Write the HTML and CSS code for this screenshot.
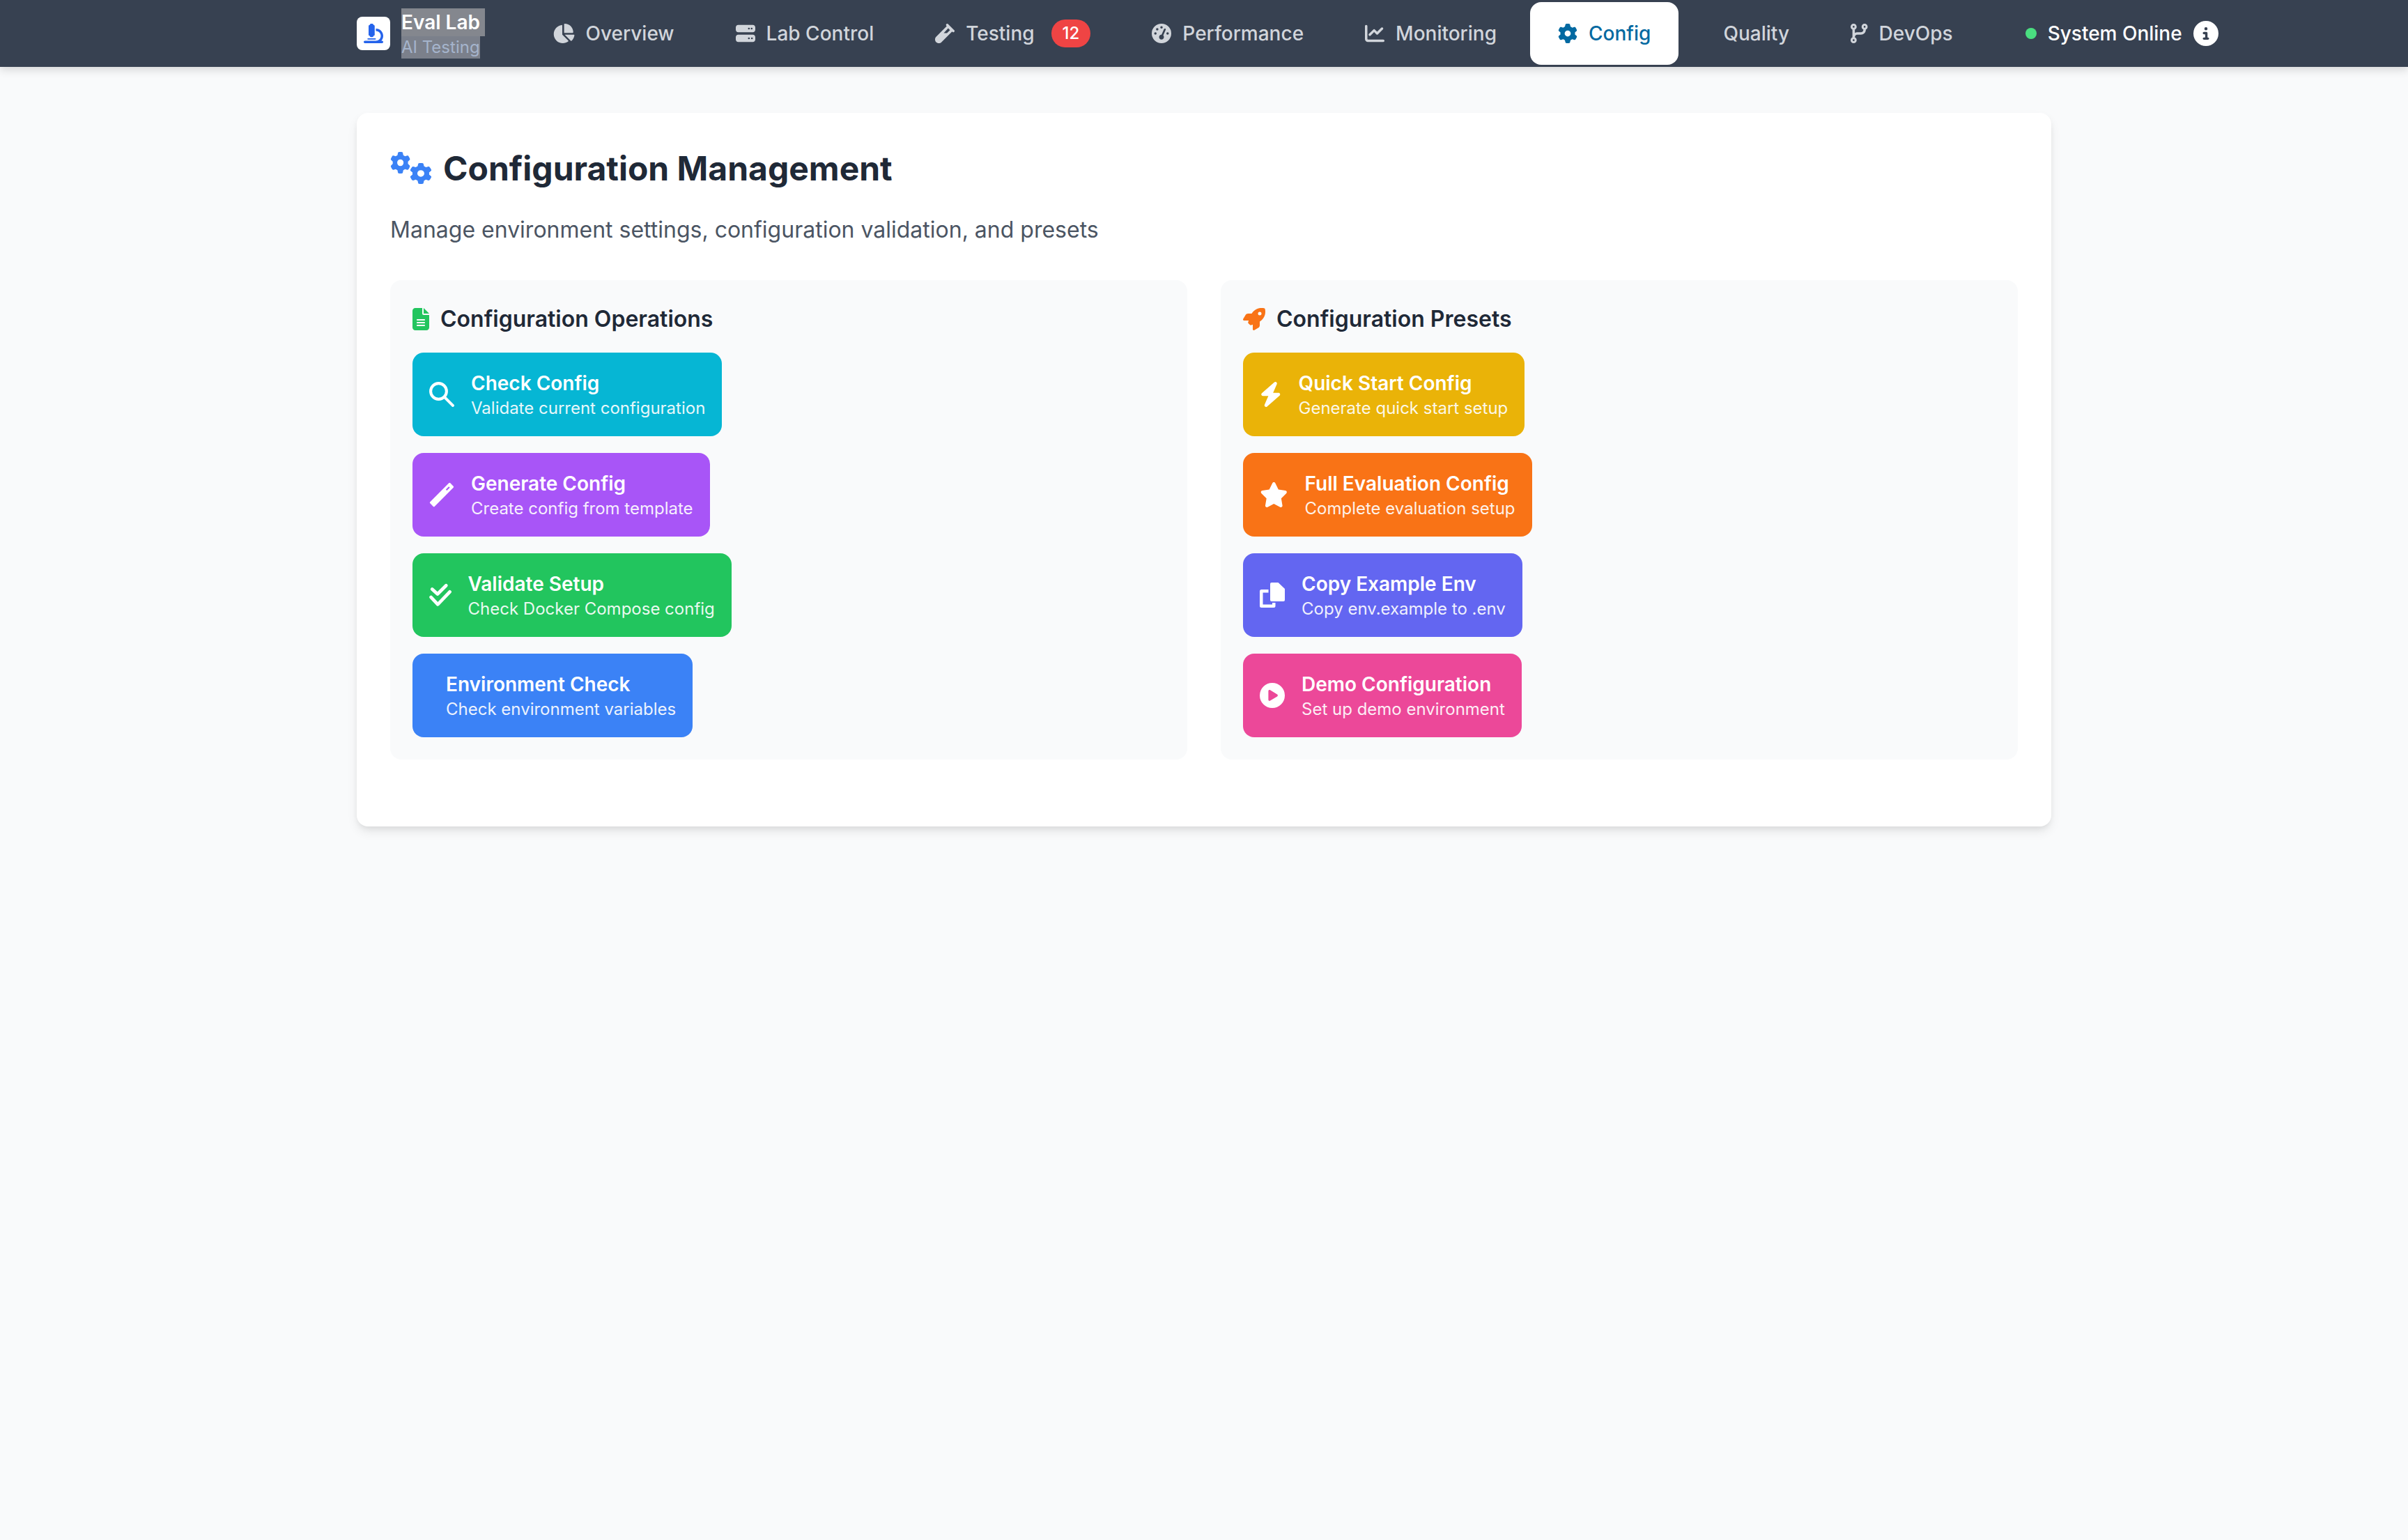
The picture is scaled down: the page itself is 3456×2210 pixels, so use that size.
FILE: index.html
```html
<!DOCTYPE html>
<html lang="en">
<head>
    <meta charset="UTF-8">
    <meta name="viewport" content="width=device-width, initial-scale=1.0">
    <title>Eval Lab - Config</title>
    <link rel="stylesheet" href="styles.css">
</head>
<body>
<svg class="defs" aria-hidden="true">
    <symbol id="gear" viewBox="0 0 512 512" preserveAspectRatio="none"><path d="M495.9 166.6c3.2 8.7 .5 18.4-6.4 24.6l-43.3 39.4c1.1 8.3 1.7 16.8 1.7 25.4s-.6 17.1-1.7 25.4l43.3 39.4c6.9 6.2 9.6 15.9 6.4 24.6c-4.4 11.9-9.7 23.3-15.8 34.3l-4.7 8.1c-6.6 11-14 21.4-22.1 31.2c-5.9 7.2-15.7 9.6-24.5 6.8l-55.7-17.7c-13.4 10.3-28.2 18.9-44 25.4l-12.5 57.1c-2 9.1-9 16.3-18.2 17.8c-13.8 2.3-28 3.5-42.5 3.5s-28.7-1.2-42.5-3.5c-9.2-1.5-16.2-8.7-18.2-17.8l-12.5-57.1c-15.8-6.5-30.6-15.1-44-25.4L83.1 425.9c-8.8 2.8-18.6 .3-24.5-6.8c-8.1-9.8-15.5-20.2-22.1-31.2l-4.7-8.1c-6.1-11-11.4-22.4-15.8-34.3c-3.2-8.7-.5-18.4 6.4-24.6l43.3-39.4C64.6 273.1 64 264.6 64 256s.6-17.1 1.7-25.4L22.4 191.2c-6.9-6.2-9.6-15.9-6.4-24.6c4.4-11.9 9.7-23.3 15.8-34.3l4.7-8.1c6.6-11 14-21.4 22.1-31.2c5.9-7.2 15.7-9.6 24.5-6.8l55.7 17.7c13.4-10.3 28.2-18.9 44-25.4l12.5-57.1c2-9.1 9-16.3 18.2-17.8C227.3 1.2 241.5 0 256 0s28.7 1.2 42.5 3.5c9.2 1.5 16.2 8.7 18.2 17.8l12.5 57.1c15.8 6.5 30.6 15.1 44 25.4l55.7-17.7c8.8-2.8 18.6-.3 24.5 6.8c8.1 9.8 15.5 20.2 22.1 31.2l4.7 8.1c6.1 11 11.4 22.4 15.8 34.3zM256 336a80 80 0 1 0 0-160 80 80 0 1 0 0 160z"/></symbol>
</svg>

<nav class="topbar">
    <div class="topbar-inner">
        <div class="brand">
            <div class="brand-logo">
                <svg class="brand-icon" viewBox="0 0 512 512"><path d="M160 32c0-17.7 14.3-32 32-32h32c17.7 0 32 14.3 32 32c17.7 0 32 14.3 32 32V288c0 17.7-14.3 32-32 32c0 17.7-14.3 32-32 32H192c-17.7 0-32-14.3-32-32c-17.7 0-32-14.3-32-32V64c0-17.7 14.3-32 32-32zM32 448H320c70.7 0 128-57.3 128-128s-57.3-128-128-128V128c106 0 192 86 192 192c0 49.2-18.5 94-48.9 128H480c17.7 0 32 14.3 32 32s-14.3 32-32 32H320 32c-17.7 0-32-14.3-32-32s14.3-32 32-32zm80-64H304c8.8 0 16 7.2 16 16s-7.2 16-16 16H112c-8.8 0-16-7.2-16-16s7.2-16 16-16z"/></svg>
            </div>
            <div class="brand-text">
                <div class="brand-name">Eval Lab</div>
                <div class="brand-sub">AI Testing</div>
            </div>
        </div>

        <a class="nav-link">
            <svg class="nav-icon" viewBox="0 0 576 512"><path d="M304 240V16.6c0-9 7-16.6 16-16.6C443.7 0 544 100.3 544 224c0 9-7.6 16-16.6 16H304zM32 272C32 150.7 122.1 50.3 239 34.3c9.2-1.3 17 6.1 17 15.4V288L412.5 444.5c6.7 6.7 6.2 17.7-1.5 23.1C371.8 495.6 323.8 512 272 512C139.5 512 32 404.6 32 272zm526.4 16c9.3 0 16.6 7.8 15.4 17c-7.7 55.9-34.6 105.6-73.9 142.3c-6 5.6-15.4 5.2-21.2-.7L320 288H558.4z"/></svg>
            Overview
        </a>
        <a class="nav-link">
            <svg class="nav-icon" viewBox="0 0 512 512"><path d="M64 32C28.7 32 0 60.7 0 96v64c0 35.3 28.7 64 64 64H448c35.3 0 64-28.7 64-64V96c0-35.3-28.7-64-64-64H64zm280 72a24 24 0 1 1 0 48 24 24 0 1 1 0-48zm48 24a24 24 0 1 1 48 0 24 24 0 1 1 -48 0zM64 288c-35.3 0-64 28.7-64 64v64c0 35.3 28.7 64 64 64H448c35.3 0 64-28.7 64-64V352c0-35.3-28.7-64-64-64H64zm280 72a24 24 0 1 1 0 48 24 24 0 1 1 0-48zm56 24a24 24 0 1 1 48 0 24 24 0 1 1 -48 0z"/></svg>
            Lab Control
        </a>
        <a class="nav-link">
            <svg class="nav-icon" viewBox="0 0 512 512"><path fill-rule="evenodd" d="M342.6 9.4c-12.5-12.5-32.8-12.5-45.3 0s-12.5 32.8 0 45.3l9.4 9.4L28.1 342.6C10.1 360.6 0 385 0 410.5V416c0 53 43 96 96 96h5.5c25.5 0 49.9-10.1 67.9-28.1L448 205.3l9.4 9.4c12.5 12.5 32.8 12.5 45.3 0s12.5-32.8 0-45.3l-16-16L358.6 25.4l-16-16zM345 120L392 167 312 248H228L345 120z"/></svg>
            Testing
            <span class="nav-badge">12</span>
        </a>
        <a class="nav-link">
            <svg class="nav-icon" viewBox="0 0 512 512"><path d="M0 256a256 256 0 1 1 512 0A256 256 0 1 1 0 256zM288 96a32 32 0 1 0 -64 0 32 32 0 1 0 64 0zM256 416c35.3 0 64-28.7 64-64c0-17.4-6.9-33.1-18.1-44.6L366 161.7c5.3-12.1-.2-26.3-12.3-31.6s-26.3 .2-31.6 12.3L257.9 288c-.6 0-1.3 0-1.9 0c-35.3 0-64 28.7-64 64s28.7 64 64 64zM176 144a32 32 0 1 0 -64 0 32 32 0 1 0 64 0zM96 288a32 32 0 1 0 0-64 32 32 0 1 0 0 64zm352-32a32 32 0 1 0 -64 0 32 32 0 1 0 64 0z"/></svg>
            Performance
        </a>
        <a class="nav-link">
            <svg class="nav-icon" viewBox="0 0 512 512"><path d="M64 64c0-17.7-14.3-32-32-32S0 46.3 0 64V400c0 44.2 35.8 80 80 80H480c17.7 0 32-14.3 32-32s-14.3-32-32-32H80c-8.8 0-16-7.2-16-16V64zm406.6 86.6c12.5-12.5 12.5-32.8 0-45.3s-32.8-12.5-45.3 0L320 210.7l-57.4-57.4c-12.5-12.5-32.8-12.5-45.3 0l-112 112c-12.5 12.5-12.5 32.8 0 45.3s32.8 12.5 45.3 0L240 221.3l57.4 57.4c12.5 12.5 32.8 12.5 45.3 0l128-128z"/></svg>
            Monitoring
        </a>
        <a class="nav-link active">
            <svg class="nav-icon" viewBox="0 0 512 512"><use href="#gear"/></svg>
            Config
        </a>
        <a class="nav-link">
            <span class="nav-icon"></span>
            Quality
        </a>
        <a class="nav-link">
            <svg class="nav-icon" viewBox="0 0 448 512"><path d="M80 104a24 24 0 1 0 0-48 24 24 0 1 0 0 48zm80-24c0 32.8-19.7 61-48 73.3v87.8c18.8-10.9 40.7-17.1 64-17.1h96c35.3 0 64-28.7 64-64v-6.7C307.7 141 288 112.8 288 80c0-44.2 35.8-80 80-80s80 35.8 80 80c0 32.8-19.7 61-48 73.3V160c0 70.7-57.3 128-128 128H176c-35.3 0-64 28.7-64 64v6.7c28.3 12.3 48 40.5 48 73.3c0 44.2-35.8 80-80 80s-80-35.8-80-80c0-32.8 19.7-61 48-73.3V353.3 153.3C19.7 141 0 112.8 0 80C0 35.8 35.8 0 80 0s80 35.8 80 80zm232 0a24 24 0 1 0 -48 0 24 24 0 1 0 48 0zM80 456a24 24 0 1 0 0-48 24 24 0 1 0 0 48z"/></svg>
            DevOps
        </a>

        <div class="status">
            <span class="status-dot"></span>
            <span class="status-text">System Online</span>
            <svg class="status-info" viewBox="0 0 512 512"><path d="M256 512A256 256 0 1 0 256 0a256 256 0 1 0 0 512zM216 336h24V272H216c-13.3 0-24-10.7-24-24s10.7-24 24-24h48c13.3 0 24 10.7 24 24v88h8c13.3 0 24 10.7 24 24s-10.7 24-24 24H216c-13.3 0-24-10.7-24-24s10.7-24 24-24zm40-208a32 32 0 1 1 0 64 32 32 0 1 1 0-64z"/></svg>
        </div>
    </div>
</nav>

<main class="content">
    <section class="card">
        <h2 class="card-title">
            <svg class="cogs-icon" viewBox="0 0 640 512">
                <use href="#gear" x="0" y="0" width="312" height="330"/>
                <use href="#gear" x="298" y="170" width="342" height="320"/>
            </svg>
            Configuration Management
        </h2>
        <p class="card-desc">Manage environment settings, configuration validation, and presets</p>

        <div class="panels">
            <div class="panel">
                <h3 class="panel-title">
                    <svg class="panel-icon green" viewBox="0 0 384 512"><path d="M64 0C28.7 0 0 28.7 0 64V448c0 35.3 28.7 64 64 64H320c35.3 0 64-28.7 64-64V160H256c-17.7 0-32-14.3-32-32V0H64zM256 0V128H384L256 0zM112 256H272c8.8 0 16 7.2 16 16s-7.2 16-16 16H112c-8.8 0-16-7.2-16-16s7.2-16 16-16zm0 64H272c8.8 0 16 7.2 16 16s-7.2 16-16 16H112c-8.8 0-16-7.2-16-16s7.2-16 16-16zm0 64H272c8.8 0 16 7.2 16 16s-7.2 16-16 16H112c-8.8 0-16-7.2-16-16s7.2-16 16-16z"/></svg>
                    Configuration Operations
                </h3>
                <div class="btn-list">
                    <button class="action-btn cyan">
                        <svg class="btn-icon line-icon" viewBox="0 0 512 512"><circle cx="192" cy="192" r="162"/><path d="M315 315L482 482"/></svg>
                        <span class="btn-text"><span class="btn-title">Check Config</span><span class="btn-sub">Validate current configuration</span></span>
                    </button>
                    <button class="action-btn purple">
                        <svg class="btn-icon" viewBox="0 0 512 512"><path fill-rule="evenodd" d="M19 401L401 19Q416 4 431 19L493 81Q508 96 493 111L111 493Q96 508 81 493L19 431Q4 416 19 401zM339 149L399 89L421 111L361 171z"/></svg>
                        <span class="btn-text"><span class="btn-title">Generate Config</span><span class="btn-sub">Create config from template</span></span>
                    </button>
                    <button class="action-btn green-bg">
                        <svg class="btn-icon line-icon check-icon" viewBox="0 0 448 512"><path d="M60 135L170 235L345 60"/><path d="M38 300L175 445L420 190"/></svg>
                        <span class="btn-text"><span class="btn-title">Validate Setup</span><span class="btn-sub">Check Docker Compose config</span></span>
                    </button>
                    <button class="action-btn blue">
                        <span class="btn-icon"></span>
                        <span class="btn-text"><span class="btn-title">Environment Check</span><span class="btn-sub">Check environment variables</span></span>
                    </button>
                </div>
            </div>

            <div class="panel">
                <h3 class="panel-title">
                    <svg class="panel-icon orange" viewBox="0 0 512 512"><path d="M156.6 384.9L125.7 354c-8.5-8.5-11.5-20.8-7.7-32.2c3-8.9 7-20.5 11.8-33.8L24 288c-8.6 0-16.6-4.6-20.9-12.1s-4.2-16.7 .2-24.1l52.5-88.5c13-21.9 36.5-35.3 61.9-35.3l82.3 0c2.4-4 4.8-7.7 7.2-11.3C289.1-4.1 411.1-8.1 483.9 5.3c11.6 2.1 20.6 11.2 22.8 22.8c13.4 72.9 9.3 194.8-111.4 276.7c-3.5 2.4-7.3 4.8-11.3 7.2v82.3c0 25.4-13.4 49-35.3 61.9l-88.5 52.5c-7.4 4.4-16.6 4.5-24.1 .2s-12.1-12.2-12.1-20.9V380.8c-14.1 4.9-26.4 8.9-35.7 11.9c-11.2 3.6-23.4 .5-31.8-7.8zM384 168a40 40 0 1 0 0-80 40 40 0 1 0 0 80z"/></svg>
                    Configuration Presets
                </h3>
                <div class="btn-list">
                    <button class="action-btn yellow">
                        <svg class="btn-icon" viewBox="0 0 448 512"><path d="M349.4 44.6c5.9-13.7 1.5-29.7-10.6-38.5s-28.6-8-39.9 1.8l-256 224c-10 8.8-13.6 22.9-8.9 35.3S50.7 288 64 288H175.5L98.6 467.4c-5.9 13.7-1.5 29.7 10.6 38.5s28.6 8 39.9-1.8l256-224c10-8.8 13.6-22.9 8.9-35.3s-16.6-20.7-30-20.7H272.5L349.4 44.6z"/></svg>
                        <span class="btn-text"><span class="btn-title">Quick Start Config</span><span class="btn-sub">Generate quick start setup</span></span>
                    </button>
                    <button class="action-btn orange-bg">
                        <svg class="btn-icon" viewBox="0 0 576 512"><path d="M316.9 18C311.6 7 300.4 0 288.1 0s-23.4 7-28.8 18L195 150.3 51.4 171.5c-12 1.8-22 10.2-25.7 21.7s-.7 24.2 7.9 32.7L137.8 329 113.2 474.7c-2 12 3 24.2 12.9 31.3s23 8 33.8 2.3l128.3-68.5 128.3 68.5c10.8 5.7 23.9 4.9 33.8-2.3s14.9-19.3 12.9-31.3L438.5 329 542.7 225.9c8.6-8.5 11.7-21.2 7.9-32.7s-13.7-19.9-25.7-21.7L381.2 150.3 316.9 18z"/></svg>
                        <span class="btn-text"><span class="btn-title">Full Evaluation Config</span><span class="btn-sub">Complete evaluation setup</span></span>
                    </button>
                    <button class="action-btn indigo">
                        <svg class="btn-icon" viewBox="0 0 36 36"><path d="M17 0H26.5L36 9V25a2 2 0 0 1-2 2H17a2 2 0 0 1-2-2V2a2 2 0 0 1 2-2z"/><path d="M2.5 10H12.5V14.5H4.5V31.5H18V29H22.5V33.5a2.5 2.5 0 0 1-2.5 2.5H2.5a2.5 2.5 0 0 1-2.5-2.5V12.5a2.5 2.5 0 0 1 2.5-2.5z"/></svg>
                        <span class="btn-text"><span class="btn-title">Copy Example Env</span><span class="btn-sub">Copy env.example to .env</span></span>
                    </button>
                    <button class="action-btn pink">
                        <svg class="btn-icon" viewBox="0 0 512 512"><path d="M0 256a256 256 0 1 1 512 0A256 256 0 1 1 0 256zM188.3 147.1c-7.6 4.2-12.3 12.3-12.3 20.9V344c0 8.7 4.7 16.7 12.3 20.9s16.8 4.1 24.3-.5l144-88c7.1-4.4 11.5-12.1 11.5-20.5s-4.4-16.1-11.5-20.5l-144-88c-7.4-4.5-16.7-4.7-24.3-.5z"/></svg>
                        <span class="btn-text"><span class="btn-title">Demo Configuration</span><span class="btn-sub">Set up demo environment</span></span>
                    </button>
                </div>
            </div>
        </div>
    </section>
</main>
</body>
</html>
```

FILE: styles.css
```css
* {
    box-sizing: border-box;
}

body {
    font-family: 'Inter', sans-serif;
    background-color: #f9fafb;
    margin: 0;
    padding: 0;
    min-height: 2210px;
}

svg {
    fill: currentColor;
}

.defs {
    display: none;
}

/* top bar */
.topbar {
    height: 96px;
    background-color: #374151;
    box-shadow: 0 4px 12px rgba(0, 0, 0, 0.15);
}

.topbar-inner {
    width: 2432px;
    height: 96px;
    margin: 0 auto;
    display: flex;
    align-items: center;
    gap: 8px;
}

.brand {
    display: flex;
    align-items: center;
    margin-right: 49px;
}

.brand-logo {
    width: 48px;
    height: 48px;
    margin-right: 16px;
    border-radius: 8px;
    background-color: white;
    color: #2563eb;
    display: flex;
    align-items: center;
    justify-content: center;
}

.brand-icon {
    width: 28px;
    height: 28px;
}

.brand-name {
    width: 120px;
    font-size: 28px;
    line-height: 40px;
    font-weight: 600;
    color: white;
    background-color: #84878e;
    white-space: nowrap;
}

.brand-sub {
    width: 113px;
    font-size: 24px;
    line-height: 32px;
    color: #a5b4cc;
    background-color: #7b808b;
    white-space: nowrap;
}

.nav-link {
    height: 90px;
    padding: 0 40px;
    display: flex;
    align-items: center;
    flex-shrink: 0;
    border-radius: 16px;
    font-size: 28px;
    font-weight: 500;
    color: #d1d5db;
    white-space: nowrap;
}

.nav-link.active {
    background-color: white;
    color: #0369a1;
}

.nav-icon {
    height: 28px;
    margin-right: 16px;
    flex-shrink: 0;
}

.nav-badge {
    margin-left: 24px;
    padding: 0 16px;
    height: 40px;
    line-height: 40px;
    border-radius: 20px;
    background-color: #ef4444;
    color: white;
    font-size: 24px;
}

.status {
    display: flex;
    align-items: center;
    flex-shrink: 0;
    margin-left: 56px;
    color: white;
    font-size: 28px;
    font-weight: 500;
    white-space: nowrap;
}

.status-dot {
    width: 16px;
    height: 16px;
    margin-right: 16px;
    border-radius: 50%;
    background-color: #4ade80;
}

.status-info {
    width: 36px;
    height: 36px;
    margin-left: 16px;
}

/* main content */
.content {
    width: 2432px;
    margin: 0 auto;
    padding-top: 66px;
}

.card {
    padding: 48px;
    background-color: white;
    border-radius: 16px;
    box-shadow: 0 8px 16px -2px rgba(0, 0, 0, 0.1), 0 4px 8px -2px rgba(0, 0, 0, 0.06);
}

.card-title {
    display: flex;
    align-items: center;
    margin: 0 0 32px;
    font-size: 48px;
    line-height: 64px;
    font-weight: 700;
    color: #1f2937;
}

.cogs-icon {
    width: 60px;
    height: 48px;
    margin-right: 16px;
    color: #3b82f6;
    flex-shrink: 0;
}

.card-desc {
    margin: 0 0 48px;
    font-size: 32px;
    line-height: 48px;
    color: #4b5563;
}

.panels {
    display: grid;
    grid-template-columns: 1fr 1fr;
    gap: 48px;
    margin-bottom: 48px;
}

.panel {
    padding: 32px;
    background-color: #f9fafb;
    border-radius: 16px;
}

.panel-title {
    display: flex;
    align-items: center;
    margin: 0 0 24px;
    font-size: 32px;
    line-height: 48px;
    font-weight: 600;
    color: #1f2937;
}

.panel-icon {
    height: 32px;
    margin-right: 16px;
    flex-shrink: 0;
}

.panel-icon.green {
    color: #22c55e;
}

.panel-icon.orange {
    color: #f97316;
}

.btn-list {
    display: flex;
    flex-direction: column;
    align-items: flex-start;
    gap: 24px;
}

.action-btn {
    display: flex;
    align-items: center;
    padding: 24px;
    border: none;
    border-radius: 16px;
    color: white;
    font-family: inherit;
    text-align: left;
    white-space: nowrap;
}

.btn-icon {
    height: 36px;
    margin-right: 24px;
    flex-shrink: 0;
}

.line-icon {
    fill: none;
    stroke: currentColor;
    stroke-width: 58;
    stroke-linecap: round;
    stroke-linejoin: round;
}

.check-icon {
    stroke-width: 68;
}

.btn-text {
    display: flex;
    flex-direction: column;
}

.btn-title {
    font-size: 28px;
    line-height: 40px;
    font-weight: 600;
}

.btn-sub {
    font-size: 24px;
    line-height: 32px;
    opacity: 0.9;
}

.cyan { background-color: #06b6d4; }
.purple { background-color: #a855f7; }
.green-bg { background-color: #22c55e; }
.blue { background-color: #3b82f6; }
.yellow { background-color: #eab308; }
.orange-bg { background-color: #f97316; }
.indigo { background-color: #6366f1; }
.pink { background-color: #ec4899; }
```
